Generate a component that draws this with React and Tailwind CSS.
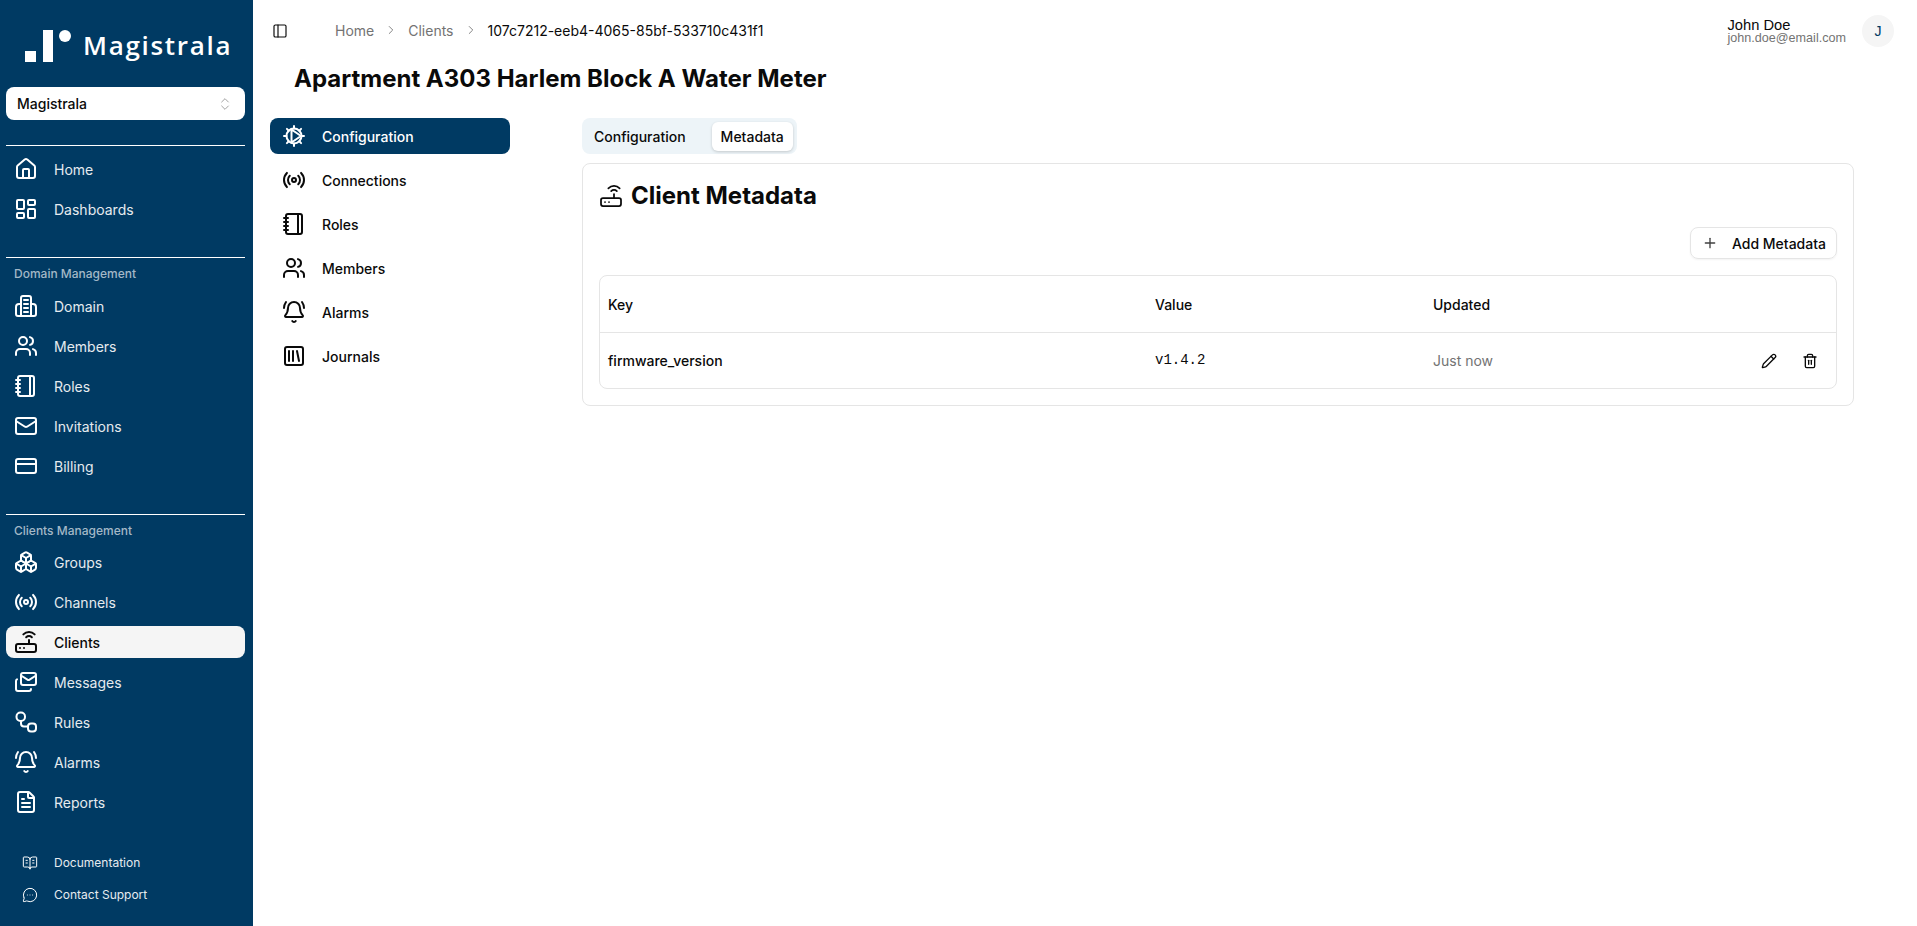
import React from "react";
import {
  House, LayoutDashboard, Users, Notebook, Mail, CreditCard, Boxes, Radio, Router, Mails, BellRing, FileText,
  BookOpenText, MessageCircleMore, ChevronsUpDown, PanelLeft, ChevronRight, Plus, Pencil, Trash2, SquareLibrary,
} from "lucide-react";

function Rules({ className }) {
  return (
    <svg className={className} viewBox="0 0 24 24" fill="none" stroke="currentColor" strokeWidth="2" strokeLinecap="round" strokeLinejoin="round">
      <rect x="2.5" y="2.5" width="8.5" height="8.5" rx="4" />
      <rect x="14" y="13.5" width="8" height="8" rx="3" />
      <path d="M7 11v2.5a3 3 0 0 0 3 3h4" />
    </svg>
  );
}

function DomainIcon({ className }) {
  return (
    <svg className={className} viewBox="0 0 24 24" fill="none" stroke="currentColor" strokeWidth="2" strokeLinecap="round" strokeLinejoin="round">
      <path d="M7 22V4a2 2 0 0 1 2-2h6a2 2 0 0 1 2 2v18" />
      <path d="M7 10H5a3 3 0 0 0-3 3v7a2 2 0 0 0 2 2h16a2 2 0 0 0 2-2v-7a3 3 0 0 0-3-3h-2" />
      <path d="M10 6h4M10 10h4M10 14h4M10 18h4" />
    </svg>
  );
}

function GearPlay({ className }) {
  return (
    <svg className={className} viewBox="0 0 24 24" fill="none" stroke="currentColor" strokeWidth="2" strokeLinecap="round" strokeLinejoin="round">
      <circle cx="12" cy="12" r="7.5" />
      <path d="M12 2v2.5M12 19.5V22M2 12h2.5M19.5 12H22M4.9 4.9l1.8 1.8M17.3 17.3l1.8 1.8M4.9 19.1l1.8-1.8M17.3 6.7l1.8-1.8" />
      <path d="M9.5 5.5v13M9.5 5.5L19 12 9.5 18.5" />
    </svg>
  );
}

function NavItem({ icon: Icon, label, active }) {
  return (
    <div className={`flex h-8 items-center gap-4 rounded-lg px-2 text-[14px] ${active ? "bg-[#f5f5f5] font-medium text-[#0a0a0a]" : "text-[#e6ebef]"}`}>
      <Icon className={`size-6 shrink-0 ${active ? "text-[#0a0a0a]" : "text-white"}`} strokeWidth={2} />
      <span>{label}</span>
    </div>
  );
}

function SideItem({ icon: Icon, label, active }) {
  return (
    <div className={`flex h-9 items-center gap-4 rounded-lg px-3 text-[14px] font-medium ${active ? "bg-[#003a63] text-white" : "text-[#0a0a0a]"}`}>
      <Icon className="size-6 shrink-0" strokeWidth={2} />
      <span>{label}</span>
    </div>
  );
}

function Crumb({ children }) {
  return <span className="text-[14px] text-[#737373]">{children}</span>;
}

export default function App() {
  return (
    <div className="flex h-[926px] w-[1917px] overflow-hidden bg-white font-['Inter',sans-serif] text-[#0a0a0a]">
      <aside className="flex w-[253px] shrink-0 flex-col bg-[#003a63] pl-[6px] pr-[8px]">
        <div className="flex h-[87px] items-center gap-[12px] pl-[19px] pt-[4px]">
          <div className="flex items-end gap-[7px]">
            <div className="size-[11px] bg-white" />
            <div className="h-[32px] w-[10px] bg-white" />
            <div className="mb-[20px] -ml-[1px] size-[12px] rounded-full bg-white" />
          </div>
          <span className="font-['Open_Sans',sans-serif] text-[26px] font-semibold tracking-[1.7px] text-white">Magistrala</span>
        </div>
        <div className="flex h-[33px] items-center justify-between rounded-lg bg-white pl-[11px] pr-[12px] text-[14px] font-medium text-[#0a0a0a]">
          <span>Magistrala</span>
          <ChevronsUpDown className="size-4 text-[#a3a3a3]" strokeWidth={1.5} />
        </div>

        <div className="mt-[25px] border-t border-white pt-[7px]">
          <div className="flex flex-col gap-2">
            <NavItem icon={House} label="Home" />
            <NavItem icon={LayoutDashboard} label="Dashboards" />
          </div>
        </div>

        <div className="mt-[32px] border-t border-white">
          <div className="flex h-[31px] items-center px-2 text-[12px] font-medium text-[#a3b8c7]">Domain Management</div>
          <div className="mt-[1px] flex flex-col gap-2">
            <NavItem icon={DomainIcon} label="Domain" />
            <NavItem icon={Users} label="Members" />
            <NavItem icon={Notebook} label="Roles" />
            <NavItem icon={Mail} label="Invitations" />
            <NavItem icon={CreditCard} label="Billing" />
          </div>
        </div>

        <div className="mt-[32px] border-t border-white">
          <div className="flex h-[31px] items-center px-2 text-[12px] font-medium text-[#a3b8c7]">Clients Management</div>
          <div className="flex flex-col gap-2">
            <NavItem icon={Boxes} label="Groups" />
            <NavItem icon={Radio} label="Channels" />
            <NavItem icon={Router} label="Clients" active />
            <NavItem icon={Mails} label="Messages" />
            <NavItem icon={Rules} label="Rules" />
            <NavItem icon={BellRing} label="Alarms" />
            <NavItem icon={FileText} label="Reports" />
          </div>
        </div>

        <div className="mt-[33px] flex flex-col gap-2 text-[12px] text-[#e6ebef]">
          <div className="flex h-6 items-center gap-4 pl-[16px]">
            <BookOpenText className="size-4 text-white" strokeWidth={1.5} />
            <span>Documentation</span>
          </div>
          <div className="flex h-6 items-center gap-4 pl-[16px]">
            <MessageCircleMore className="size-4 text-white" strokeWidth={1.5} />
            <span>Contact Support</span>
          </div>
        </div>
      </aside>

      <main className="flex min-w-0 flex-1 flex-col">
        <header className="flex h-[62px] items-center pl-[19px] pr-[23px]">
          <PanelLeft className="size-4" strokeWidth={1.75} />
          <div className="mb-[2px] ml-[47px] flex items-center">
            <Crumb>Home</Crumb>
            <ChevronRight className="mx-[10px] size-[14px] text-[#737373]" strokeWidth={1.5} />
            <Crumb>Clients</Crumb>
            <ChevronRight className="mx-[10px] size-[14px] text-[#737373]" strokeWidth={1.5} />
            <span className="text-[14px] text-[#0a0a0a]">107c7212-eeb4-4065-85bf-533710c431f1</span>
          </div>
          <div className="ml-auto flex items-center gap-4">
            <div className="mt-[1px] flex flex-col font-['Liberation_Sans',sans-serif]">
              <span className="text-[14.7px] leading-[13px]">John Doe</span>
              <span className="text-[12.6px] leading-[13px] text-[#737373]">john.doe@email.com</span>
            </div>
            <div className="flex size-8 items-center justify-center rounded-full bg-[#f5f5f5] font-['Liberation_Sans',sans-serif] text-[14px] text-[#003a63]">J</div>
          </div>
        </header>

        <h1 className="ml-[41px] mt-[1px] text-[24px] font-bold leading-[32px]">Apartment A303 Harlem Block A Water Meter</h1>

        <div className="mt-[23px] flex pl-[17px] pr-[63px]">
          <nav className="flex w-[240px] shrink-0 flex-col gap-2 pt-0">
            <SideItem icon={GearPlay} label="Configuration" active />
            <SideItem icon={Radio} label="Connections" />
            <SideItem icon={Notebook} label="Roles" />
            <SideItem icon={Users} label="Members" />
            <SideItem icon={BellRing} label="Alarms" />
            <SideItem icon={SquareLibrary} label="Journals" />
          </nav>

          <section className="ml-[72px] flex min-w-0 flex-1 flex-col gap-[9px]">
            <div className="flex h-9 w-fit items-center gap-1 rounded-lg bg-[#edf4f8] p-1 text-[14px] font-medium">
              <div className="flex h-7 items-center rounded-md px-2">Configuration</div>
              <div className="ml-[14px] flex h-[29px] items-center rounded-md bg-white px-[9px] shadow-[0_1px_3px_rgba(0,0,0,0.18)]">Metadata</div>
            </div>

            <div className="rounded-lg border border-[#e5e5e5] px-4 pb-4">
              <div className="flex h-[63px] items-center gap-2">
                <Router className="size-6" strokeWidth={1.75} />
                <h2 className="text-[24px] font-bold">Client Metadata</h2>
              </div>
              <div className="flex justify-end">
                <div className="flex h-8 items-center gap-[14px] rounded-lg border border-[#e5e5e5] pl-[11px] pr-[10px] text-[14px] font-medium shadow-[0_1px_2px_rgba(0,0,0,0.05)]">
                  <Plus className="size-4 text-[#404040]" strokeWidth={2} />
                  <span>Add Metadata</span>
                </div>
              </div>
              <div className="mt-4 overflow-hidden rounded-lg border border-[#e5e5e5]">
                <div className="grid h-[57px] grid-cols-[547px_278px_1fr] items-center border-b border-[#e5e5e5] px-2 text-[14px] font-medium">
                  <span>Key</span>
                  <span>Value</span>
                  <span>Updated</span>
                </div>
                <div className="grid h-[55px] grid-cols-[547px_278px_1fr_auto] items-center px-2 text-[14px]">
                  <span className="font-medium">firmware_version</span>
                  <span className="font-['Liberation_Mono',monospace] text-[14px]">v1.4.2</span>
                  <span className="text-[#737373]">Just now</span>
                  <div className="flex items-center gap-[25px] pr-[10px]">
                    <Pencil className="size-4" strokeWidth={2} />
                    <Trash2 className="size-4" strokeWidth={2} />
                  </div>
                </div>
              </div>
            </div>
          </section>
        </div>
      </main>
    </div>
  );
}
